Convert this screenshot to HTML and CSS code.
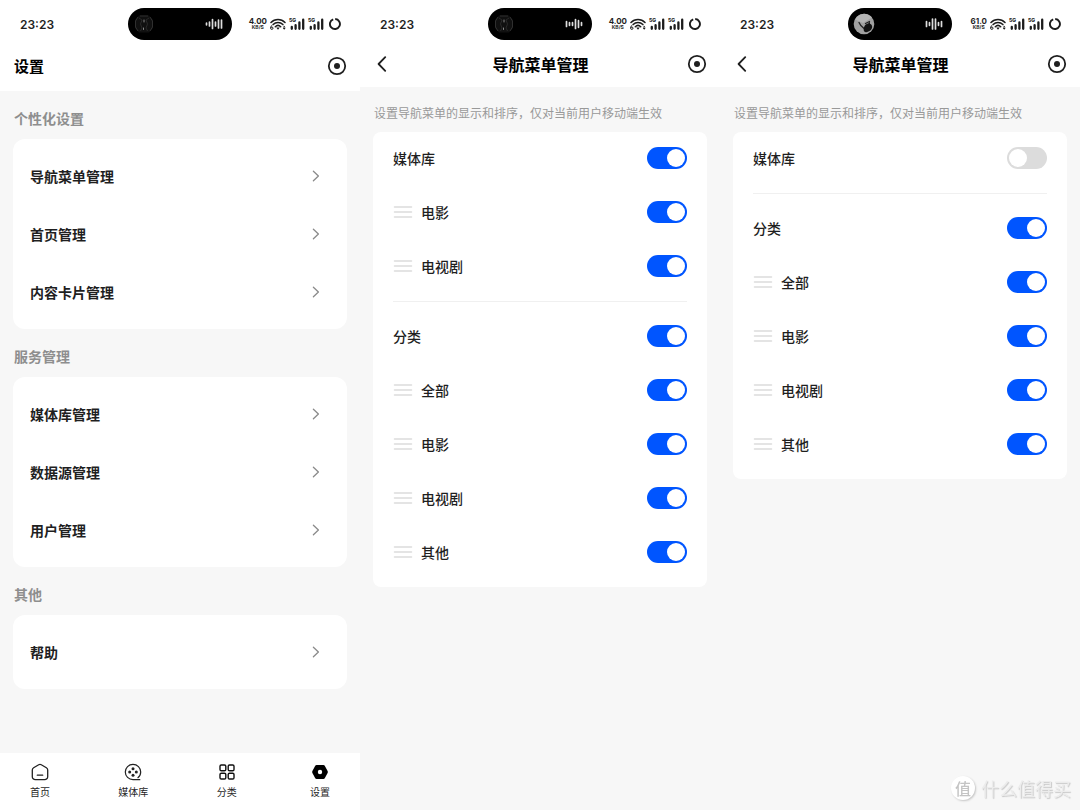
FILE: index.html
```html
<!DOCTYPE html>
<html lang="zh-CN">
<head>
<meta charset="UTF-8" />
<meta name="viewport" content="width=device-width, initial-scale=1" />
<title>设置</title>
<link rel="stylesheet" href="styles.css">
</head>
<body>
  <!-- shared icons -->
  <svg class="sprite" aria-hidden="true">
    <symbol id="wifi" viewBox="0 0 16 12">
      <path d="M1 4.4a9.800 9.800 0 0 1 14 0M3.100 6.600a6.800 6.800 0 0 1 9.800 0M5.300 8.700a3.900 3.900 0 0 1 5.400 0" fill="none" stroke="#1c1c1c" stroke-width="1.500" stroke-linecap="round"/>
      <path d="M6.200 9.600h3.600L8 11.800z" fill="#1c1c1c"/>
      <circle cx="1.800" cy="10.200" r="1.200" fill="none" stroke="#1c1c1c" stroke-width="1"/>
      <path d="M.8 10V8.500l1.200-1" fill="none" stroke="#1c1c1c" stroke-width=".9"/>
      <path d="M12.800 9.400 14.200 7.700l1.400 1.700zM12.800 10.100l1.400 1.700 1.400-1.700z" fill="#1c1c1c"/>
    </symbol>
    <symbol id="signal" viewBox="0 0 16 12">
      <path d="M2.800 8.900v1.900M6.600 7.200v3.600M10.400 4.400v6.400M14.200 1.700v9.100" stroke="#1c1c1c" stroke-width="2.300" stroke-linecap="round"/>
    </symbol>
    <symbol id="ring" viewBox="0 0 12 12">
      <path d="M6.200 1A5 5 0 1 1 4.200 1.300" fill="none" stroke="#1c1c1c" stroke-width="1.900"/>
    </symbol>
    <symbol id="target" viewBox="0 0 20 20">
      <circle cx="10" cy="10" r="8.2" fill="none" stroke="#1f1f1f" stroke-width="1.8"/>
      <circle cx="10" cy="10" r="3" fill="#1f1f1f"/>
    </symbol>
    <symbol id="back" viewBox="0 0 10 16">
      <path d="M8.2 1.2 1.6 8l6.6 6.8" fill="none" stroke="#1f1f1f" stroke-width="1.8" stroke-linecap="round" stroke-linejoin="round"/>
    </symbol>
    <symbol id="chevron" viewBox="0 0 8 12">
      <path d="m1.4 1.2 5 4.800-5 4.800" fill="none" stroke="#8a8a8a" stroke-width="1.3" stroke-linecap="round" stroke-linejoin="round"/>
    </symbol>
    <symbol id="drag" viewBox="0 0 20 14">
      <path d="M1.5 2h17M1.5 7h17M1.5 12h17" stroke="#dcdcdc" stroke-width="1.6" stroke-linecap="round"/>
    </symbol>
    <symbol id="cover-dark" viewBox="0 0 22 22">
      <path d="M6 2.500h10L20 7v8l-4 4.500H6L2 15V7z" fill="#101010"/>
      <path d="M5 4 2.500 8v6L5 18M17 4l2.500 4v6L17 18M7 3h8" fill="none" stroke="#333" stroke-width=".9"/>
      <path d="M6 5l3 2-1.500 4L9 15l-1.500 3M16 5l-3 2 1.500 4-1.500 4 1.500 3" fill="none" stroke="#2c2c2c" stroke-width=".9"/>
      <path d="M11 7v2M10.500 15v1.500" stroke="#888" stroke-width="1" stroke-linecap="round"/>
    </symbol>
    <symbol id="cover-light" viewBox="0 0 22 22">
      <circle cx="11" cy="11" r="10.300" fill="#a0a0a0"/>
      <path d="M2 6.500A10.200 10.200 0 0 1 19 4.500L10 10z" fill="#b4b4b4"/>
      <path d="M6 9.500c1 2.500 3 4.500 5 6M12.500 10.500l4-2" fill="none" stroke="#222" stroke-width="1.300" stroke-linecap="round"/>
      <path d="M11 14.500c.5-2 2-3.800 4.300-4l1.400-2 .3 2.300c2 .8 2.700 2.700 1.800 4.800-1 2.200-3.600 3.800-6 3.600-2-.2-2.600-2.200-1.800-4.700z" fill="#111"/>
    </symbol>
  </svg>

  <main class="screens">
    <section class="phone">
      <div class="status">
        <span class="clock">23:23</span>
        <div class="island">
          <svg class="cover"><use href="#cover-dark"/></svg>
          <svg class="wave" viewBox="0 0 18 12"><path d="M1.500 5.200v1.600M4.500 4v4M7.500 1.500v9M10.500 4v4M13.500 2v8M16.500 2v8"/></svg>
        </div>
        <div class="status-icons">
          <span class="speed"><b>4.00</b><small>KB/S</small></span>
          <svg class="net"><use href="#wifi"/></svg>
          <span class="cell"><i>5G</i><svg class="net"><use href="#signal"/></svg></span>
          <span class="cell"><i>5G</i><svg class="net"><use href="#signal"/></svg></span>
          <svg class="battery"><use href="#ring"/></svg>
        </div>
      </div>
      <header class="topbar topbar-home">
        <h1>设置</h1>
        <button class="icon-btn" aria-label="投屏"><svg class="target"><use href="#target"/></svg></button>
      </header>

      <h2 class="group-title">个性化设置</h2>
      <div class="card menu">
        <a href="#">导航菜单管理<svg class="chevron"><use href="#chevron"/></svg></a>
        <a href="#">首页管理<svg class="chevron"><use href="#chevron"/></svg></a>
        <a href="#">内容卡片管理<svg class="chevron"><use href="#chevron"/></svg></a>
      </div>
      <h2 class="group-title">服务管理</h2>
      <div class="card menu">
        <a href="#">媒体库管理<svg class="chevron"><use href="#chevron"/></svg></a>
        <a href="#">数据源管理<svg class="chevron"><use href="#chevron"/></svg></a>
        <a href="#">用户管理<svg class="chevron"><use href="#chevron"/></svg></a>
      </div>
      <h2 class="group-title">其他</h2>
      <div class="card menu">
        <a href="#">帮助<svg class="chevron"><use href="#chevron"/></svg></a>
      </div>

      <nav class="tabbar">
        <a href="#">
          <svg viewBox="0 0 20 20"><path d="M8.700 2.700 3.600 5.700Q2.300 6.500 2.300 8v6.700a3 3 0 0 0 3 3h9.400a3 3 0 0 0 3-3V8q0-1.500-1.300-2.300l-5.100-3q-1.300-.700-2.600 0zM7.300 13.200h5.400" fill="none" stroke="#222" stroke-width="1.300" stroke-linecap="round"/></svg>
          首页
        </a>
        <a href="#">
          <svg viewBox="0 0 20 20"><path d="M16.800 17.700H10A7.700 7.700 0 1 1 17.700 10c0 2.300-1 4.300-2.800 5.700" fill="none" stroke="#222" stroke-width="1.200" stroke-linecap="round"/><g fill="#222"><circle cx="10" cy="6.700" r="1.500"/><circle cx="10" cy="13.300" r="1.500"/><circle cx="6.700" cy="10" r="1.500"/><circle cx="13.300" cy="10" r="1.500"/></g></svg>
          媒体库
        </a>
        <a href="#">
          <svg viewBox="0 0 20 20"><g fill="none" stroke="#111" stroke-width="1.400"><rect x="3" y="3" width="5.800" height="5.800" rx="1.300"/><rect x="11.200" y="3" width="5.800" height="5.800" rx="1.300"/><rect x="3" y="11.200" width="5.800" height="5.800" rx="1.300"/><rect x="11.200" y="11.200" width="5.800" height="5.800" rx="1.300"/></g></svg>
          分类
        </a>
        <a href="#" aria-current="page">
          <svg viewBox="0 0 20 20"><path d="M6.600 3h6.800q1 0 1.500.900l2.700 5.200q.500.900 0 1.800l-2.700 5.200q-.500.900-1.500.900H6.600q-1 0-1.500-.900L2.400 10.900q-.500-.900 0-1.800l2.700-5.200Q5.600 3 6.600 3z" fill="#000"/><circle cx="10" cy="10" r="2.200" fill="#fff"/></svg>
          设置
        </a>
      </nav>
    </section>

    <section class="phone">
      <div class="status">
        <span class="clock">23:23</span>
        <div class="island">
          <svg class="cover"><use href="#cover-dark"/></svg>
          <svg class="wave" viewBox="0 0 18 12"><path d="M1.500 3.500v5M4.500 4.700v2.600M7.500 4.700v2.600M10.500 1.500v9M13.500 2.700v6.600M16.500 4.700v2.600"/></svg>
        </div>
        <div class="status-icons">
          <span class="speed"><b>4.00</b><small>KB/S</small></span>
          <svg class="net"><use href="#wifi"/></svg>
          <span class="cell"><i>5G</i><svg class="net"><use href="#signal"/></svg></span>
          <span class="cell"><i>5G</i><svg class="net"><use href="#signal"/></svg></span>
          <svg class="battery"><use href="#ring"/></svg>
        </div>
      </div>
      <header class="topbar">
        <button class="icon-btn" aria-label="返回"><svg class="back"><use href="#back"/></svg></button>
        <h1>导航菜单管理</h1>
        <button class="icon-btn" aria-label="投屏"><svg class="target"><use href="#target"/></svg></button>
      </header>

      <p class="hint">设置导航菜单的显示和排序，仅对当前用户移动端生效</p>
      <div class="card switches">
        <div class="group">
          <label class="row">媒体库<input type="checkbox" class="switch" checked></label>
          <label class="row"><svg class="drag"><use href="#drag"/></svg>电影<input type="checkbox" class="switch" checked></label>
          <label class="row"><svg class="drag"><use href="#drag"/></svg>电视剧<input type="checkbox" class="switch" checked></label>
        </div>
        <div class="group">
          <label class="row">分类<input type="checkbox" class="switch" checked></label>
          <label class="row"><svg class="drag"><use href="#drag"/></svg>全部<input type="checkbox" class="switch" checked></label>
          <label class="row"><svg class="drag"><use href="#drag"/></svg>电影<input type="checkbox" class="switch" checked></label>
          <label class="row"><svg class="drag"><use href="#drag"/></svg>电视剧<input type="checkbox" class="switch" checked></label>
          <label class="row"><svg class="drag"><use href="#drag"/></svg>其他<input type="checkbox" class="switch" checked></label>
        </div>
      </div>
    </section>

    <section class="phone">
      <div class="status">
        <span class="clock">23:23</span>
        <div class="island">
          <svg class="cover"><use href="#cover-light"/></svg>
          <svg class="wave" viewBox="0 0 18 12"><path d="M1.500 3.500v5M4.500 4.700v2.600M7.500 1v10M10.500 1v10M13.500 4.700v2.600M16.500 3.500v5"/></svg>
        </div>
        <div class="status-icons">
          <span class="speed"><b>61.0</b><small>KB/S</small></span>
          <svg class="net"><use href="#wifi"/></svg>
          <span class="cell"><i>5G</i><svg class="net"><use href="#signal"/></svg></span>
          <span class="cell"><i>5G</i><svg class="net"><use href="#signal"/></svg></span>
          <svg class="battery"><use href="#ring"/></svg>
        </div>
      </div>
      <header class="topbar">
        <button class="icon-btn" aria-label="返回"><svg class="back"><use href="#back"/></svg></button>
        <h1>导航菜单管理</h1>
        <button class="icon-btn" aria-label="投屏"><svg class="target"><use href="#target"/></svg></button>
      </header>

      <p class="hint">设置导航菜单的显示和排序，仅对当前用户移动端生效</p>
      <div class="card switches">
        <div class="group">
          <label class="row">媒体库<input type="checkbox" class="switch"></label>
        </div>
        <div class="group">
          <label class="row">分类<input type="checkbox" class="switch" checked></label>
          <label class="row"><svg class="drag"><use href="#drag"/></svg>全部<input type="checkbox" class="switch" checked></label>
          <label class="row"><svg class="drag"><use href="#drag"/></svg>电影<input type="checkbox" class="switch" checked></label>
          <label class="row"><svg class="drag"><use href="#drag"/></svg>电视剧<input type="checkbox" class="switch" checked></label>
          <label class="row"><svg class="drag"><use href="#drag"/></svg>其他<input type="checkbox" class="switch" checked></label>
        </div>
      </div>
    </section>
  </main>

  <div class="watermark"><span class="badge">值</span>什么值得买</div>
</body>
</html>
```

FILE: styles.css
```css
/* Reset and base */
* {
  box-sizing: border-box;
}
body {
  font-family: "Noto Sans CJK SC", sans-serif;
  font-size: 14px;
  background: #f7f7f7;
  color: #1f1f1f;
  margin: 0;
}
h1, h2, p {
  margin: 0;
}
a {
  color: inherit;
  text-decoration: none;
}
svg {
  display: block;
  flex: none;
}
.sprite {
  display: none;
}
.screens {
  display: grid;
  grid-template-columns: repeat(3, 1fr);
  min-height: 100vh;
}
.phone {
  display: flex;
  flex-direction: column;
}

/* Status bar */
.status {
  display: grid;
  grid-template-columns: 1fr auto 1fr;
  align-items: center;
  height: 48px;
  padding: 0 19px;
  background: #fff;
  font-family: Inter, sans-serif;
}
.clock {
  padding-left: 1px;
  font-size: 12px;
  font-weight: 600;
}
.island {
  display: flex;
  align-items: center;
  justify-content: space-between;
  width: 104px;
  height: 32px;
  padding: 0 9px 0 5px;
  border-radius: 16px;
  background: #000;
}
.cover {
  width: 22px;
  height: 22px;
}
.wave {
  width: 18px;
  height: 12px;
  stroke: #ddd;
  stroke-width: 1.7;
  stroke-linecap: round;
}
.status-icons {
  display: flex;
  align-items: center;
  justify-content: flex-end;
  gap: 3px;
}
.speed {
  display: flex;
  flex-direction: column;
  align-items: center;
  line-height: 5px;
}
.speed b {
  font-size: 8px;
  font-weight: 700;
  line-height: 7px;
}
.speed small {
  font-size: 5px;
  font-weight: 700;
}
.net {
  width: 16px;
  height: 12px;
}
.cell {
  position: relative;
}
.cell i {
  position: absolute;
  top: 0;
  left: 0;
  font-size: 5px;
  font-style: normal;
  font-weight: 800;
  line-height: 5px;
}
.battery {
  width: 12px;
  height: 12px;
  margin-left: 2px;
}

/* Title bar */
.topbar {
  display: grid;
  grid-template-columns: 1fr auto 1fr;
  align-items: center;
  height: 39px;
  padding: 0 13px 7px 14px;
  background: #fff;
}
.topbar-home {
  grid-template-columns: 1fr auto;
  height: 43px;
}
.topbar h1 {
  font-size: 16px;
  font-weight: 700;
  line-height: 24px;
  color: #000;
}
.topbar-home h1 {
  font-size: 15px;
}
.icon-btn {
  justify-self: end;
  padding: 0;
  border: none;
  background: none;
  cursor: pointer;
}
.icon-btn:first-child {
  justify-self: start;
  padding-left: 3px;
}
.target {
  width: 20px;
  height: 20px;
}
.back {
  width: 10px;
  height: 16px;
}

/* Cards */
.card {
  margin: 0 13px;
  border-radius: 12px;
  background: #fff;
}
.group-title {
  padding: 17px 14px 11px;
  font-size: 14px;
  font-weight: 700;
  line-height: 20px;
  color: #8e8e8e;
}
.menu {
  padding: 8px 27px 8px 17px;
}
.menu a {
  display: flex;
  align-items: center;
  justify-content: space-between;
  height: 58px;
  font-weight: 700;
}
.chevron {
  width: 8px;
  height: 12px;
}
.hint {
  padding: 16px 14px 9px;
  font-size: 12px;
  line-height: 20px;
  color: #999;
}
.switches {
  padding: 0 20px 7px;
  border-radius: 8px;
}
.group + .group {
  margin-top: 7px;
  padding-top: 8px;
  border-top: 1px solid #f0f0f0;
}
.row {
  display: flex;
  align-items: center;
  height: 54px;
  padding-bottom: 2px;
  font-weight: 500;
}
.drag {
  width: 20px;
  height: 14px;
  margin-right: 8px;
}
.switch {
  appearance: none;
  width: 40px;
  height: 22px;
  margin: 0 0 0 auto;
  padding: 2px;
  border-radius: 11px;
  background: #dcdcdc;
  cursor: pointer;
}
.switch::before {
  content: "";
  display: block;
  width: 18px;
  height: 18px;
  border-radius: 50%;
  background: #fff;
}
.switch:checked {
  background: #0055ff;
}
.switch:checked::before {
  margin-left: auto;
}

/* Bottom tabs */
.tabbar {
  display: flex;
  justify-content: space-between;
  height: 57px;
  margin-top: auto;
  padding: 9px 10px 0;
  background: #fff;
}
.tabbar a {
  display: flex;
  flex-direction: column;
  align-items: center;
  gap: 3px;
  width: 60px;
  font-size: 10px;
  line-height: 14px;
}
.tabbar svg {
  width: 20px;
  height: 20px;
}

/* Watermark over the bottom right corner */
.watermark {
  position: fixed;
  right: 9px;
  bottom: 9px;
  display: flex;
  align-items: center;
  gap: 6px;
  font-size: 18px;
  line-height: 26px;
  color: #ececec;
  text-shadow: 1px 1px 1px #c8c8c8;
}
.badge {
  width: 24px;
  height: 24px;
  border-radius: 50%;
  background: #fff;
  box-shadow: 1px 1px 2px #c4c4c4;
  color: #c4c4c4;
  font-size: 16px;
  font-weight: 500;
  line-height: 24px;
  text-align: center;
  text-shadow: none;
}
```
